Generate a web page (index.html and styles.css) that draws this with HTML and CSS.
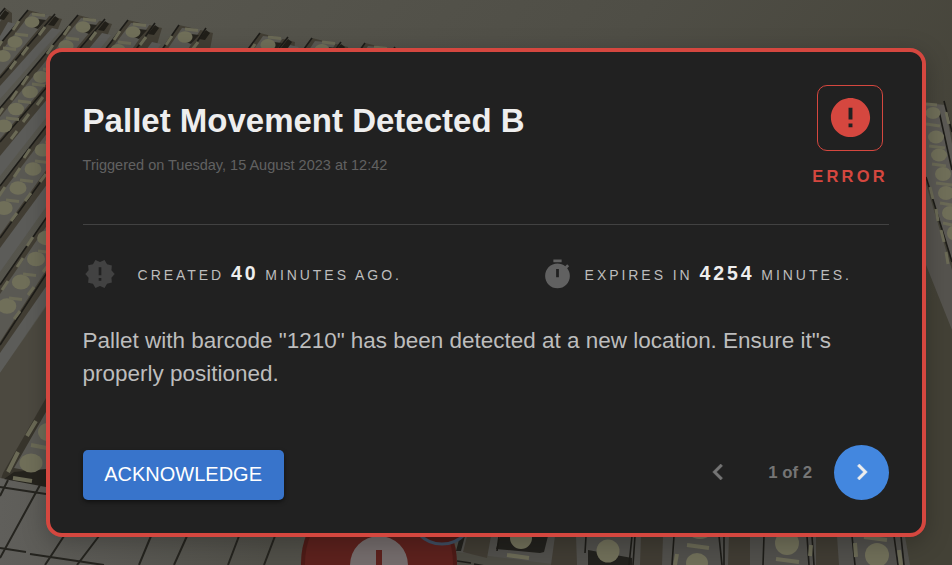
FILE: index.html
```
<!DOCTYPE html>
<html lang="en">
<head>
<meta charset="utf-8">
<title>Pallet Movement Detected</title>
<link rel="stylesheet" href="styles.css">
</head>
<body>
<svg class="scene" viewBox="0 0 952 565" aria-hidden="true">
  <defs>
    <linearGradient id="wall" x1="0" y1="0" x2="1" y2="0.5">
      <stop offset="0" stop-color="#595850"/><stop offset="0.55" stop-color="#4f4e46"/><stop offset="1" stop-color="#434136"/>
    </linearGradient>
    <linearGradient id="floor" x1="0" y1="0" x2="1" y2="0">
      <stop offset="0" stop-color="#605f5b"/><stop offset="0.3" stop-color="#504f48"/><stop offset="1" stop-color="#4e4d48"/>
    </linearGradient>
  </defs>
  <rect width="952" height="565" fill="url(#wall)"/>
  <g id="lanes"></g>
  <path d="M46 307L0 373V482L4 473L46 398Z" fill="#4c4940"/>
  <path d="M46 398L3 473L0 482L46 487Z" fill="#38352c"/>
  <path d="M46 412L14 468L46 474Z" fill="#5a5953"/>
  <path d="M0 478L46 485V520L120 536H905L900 565H0Z" fill="url(#floor)"/>
  <path d="M14 472L46 469V487L4 479Z" fill="#25231d"/>
  <g class="disc"><ellipse cx="31" cy="463" rx="11.500" ry="9.500"/><ellipse cx="47" cy="432" rx="9" ry="9"/></g>
  <path class="slat" d="M13 478L32 481M8 472L18 452M27 436L36 421M31 445L47 448"/>
  <path class="grid" d="M0 487L46 494M0 548L26 552M30 554L104 565M8 480L0 496M40 485L0 558M64 536L45 565M99 536L77 565M151 536L139 565M187 536L174 565M239 536L228 565M275 536L264 565"/>
  <path d="M457 536H905L910 565H457Z" fill="#504f4b"/>
  <path d="M457 552L560 565H457Z" fill="#4b4a42"/>
  <path d="M460 536H465L461 551H456ZM500 536H548L544 552L540 553L496 549ZM588 550L632 558V565H588Z" fill="#22211d"/>
  <path d="M467 536H491L487 558L463 552ZM555 536H576L577 565H551ZM641 536H663L662 565H640ZM729 536H750V565H728ZM816 536H837L839 565H816Z" fill="#403c33"/>
  <path class="rail" d="M499 536L497 551M457 561L471 563M474 564L490 567M586 536L585 553M632 536L629 565M635 536L633 565M674 536L672 565M719 536L722 565M724 536V565M764 536L763 565M807 536L809 565M812 536L814 565M852 536L855 565M894 536L898 565M901 536L904 565"/>
  <g class="disc"><circle cx="521" cy="538" r="11"/><circle cx="608" cy="551" r="11.500"/><ellipse cx="697" cy="563" rx="11" ry="10"/><circle cx="787" cy="543" r="12"/><circle cx="877" cy="555" r="12"/><ellipse cx="700" cy="536" rx="8" ry="3"/></g>
  <path class="slat" d="M507 555L529 558M687 545L709 548M776 559L799 562M864 537L887 540M899 550L901 565M677 554L675 565M855 543L856 557M811 545L810 556"/>
  <circle cx="379" cy="563" r="78" fill="#4d1b17"/><circle cx="379" cy="563" r="74" fill="#5c211d"/>
  <circle cx="379" cy="565" r="29" fill="#746c6c"/><rect x="376" y="550" width="6" height="15" fill="#5c211d"/>
  <circle cx="442" cy="512" r="32" fill="#4d1b17" stroke="#3f4d60" stroke-width="3"/>
  <g transform="translate(926 100)">
    <path d="M0 3L19 5L26 44V160L0 80Z" fill="#5b5954"/>
    <path d="M0 84L26 170V230L0 165Z" fill="#55534e"/>
    <path class="rail" d="M0 77L26 162M13 11L26 70M18 1L26 32"/>
    <g class="disc"><ellipse cx="7" cy="13" rx="7.500" ry="6"/><ellipse cx="10" cy="37" rx="8" ry="6.500"/><ellipse cx="13" cy="55" rx="8" ry="6.500"/><ellipse cx="17" cy="74" rx="8" ry="7"/><ellipse cx="20" cy="93" rx="8" ry="7"/><ellipse cx="24" cy="113" rx="8" ry="7"/><ellipse cx="27" cy="133" rx="6" ry="7"/></g>
    <path class="slat thin" d="M0 4L11 5M0 24L14 26M3 46L19 48M6 64L20 66M10 83L26 85M14 103L26 105M17 123L26 125M4 87L7 99M10 109L12 121M15 130L18 142M20 152L22 164M20 12L23 24"/>
  </g>
</svg>
<main class="card">
  <header class="head">
    <div>
      <h1 class="title">Pallet Movement Detected B</h1>
      <p class="when">Triggered on Tuesday, 15 August 2023 at 12:42</p>
    </div>
    <div class="level">
      <div class="level-box">
        <svg width="47" height="47" viewBox="0 0 24 24" fill="currentColor"><path d="M12 2C6.480 2 2 6.480 2 12s4.480 10 10 10 10-4.480 10-10S17.520 2 12 2zm1 15h-2v-2h2v2zm0-4h-2V7h2v6z"/></svg>
      </div>
      <span class="level-name">ERROR</span>
    </div>
  </header>
  <section class="facts">
    <div class="fact">
      <svg class="seal" width="32" height="32" viewBox="0 0 24 24" fill="currentColor"><path d="M23 12l-2.440-2.780.340-3.680-3.610-.820-1.890-3.180L12 3 8.600 1.540 6.710 4.720l-3.610.810.340 3.680L1 12l2.440 2.780-.340 3.690 3.610.820 1.890 3.180L12 21l3.400 1.460 1.890-3.180 3.610-.820-.340-3.680L23 12zm-10 5h-2v-2h2v2zm0-4h-2V7h2v6z"/></svg>
      <span class="fact-text">CREATED <b>40</b> MINUTES AGO.</span>
    </div>
    <div class="fact">
      <svg class="timer" width="33" height="33" viewBox="0 0 24 24" fill="currentColor" fill-rule="evenodd"><path d="M15 1H9v2h6V1zm-4 13h2V8h-2v6zm8.030-6.610l1.420-1.420c-.430-.510-.900-.990-1.410-1.410l-1.420 1.420C16.070 4.740 14.120 4 12 4c-4.970 0-9 4.030-9 9s4.020 9 9 9 9-4.030 9-9c0-2.120-.740-4.070-1.970-5.610z"/></svg>
      <span class="fact-text">EXPIRES IN <b>4254</b> MINUTES.</span>
    </div>
  </section>
  <p class="message">Pallet with barcode "1210" has been detected at a new location. Ensure it"s properly positioned.</p>
  <footer class="foot">
    <button class="ack">ACKNOWLEDGE</button>
    <nav class="pager">
      <svg class="prev arrow" width="32" height="32" viewBox="0 0 24 24" fill="currentColor"><path d="M15.410 7.410L14 6l-6 6 6 6 1.410-1.410L10.830 12z"/></svg>
      <span class="count">1 of 2</span>
      <button class="next" aria-label="Next"><svg class="arrow" width="32" height="32" viewBox="0 0 24 24" fill="currentColor"><path d="M10 6L8.590 7.410 13.170 12l-4.580 4.590L10 18l6-6z"/></svg></button>
    </nav>
  </footer>
</main>
<script src="scene.js"></script>
</body>
</html>
```
FILE: scene.js
```
// Each lane: left edge, right edge and beam as [x, y, x, y] segments, plus its rollers.
const lanes = [
  { left: [5, 8, -10, 26], right: [5, 8, -25, 44], beam: [8, 22, 0, 36, 9], rollers: [] },
  { left: [28, 10, 0, 44], right: [55, 14, 0, 78], beam: [52, 28, 0, 86, 13], rollers: [[32, 22], [15, 42], [3, 56]] },
  { left: [78, 15, 0, 108], right: [105, 19, 0, 142], beam: [102, 33, 0, 156, 20], rollers: [[83, 27], [66, 46], [41, 77], [30, 92], [16, 109], [4, 126]] },
  { left: [128, 20, 0, 186], right: [155, 23, 0, 238], beam: [152, 42, 0, 248, 24], rollers: [[133, 32], [118, 50], [43, 150], [33, 169], [18, 188], [4, 208]] },
  { left: [179, 25, 0, 285], right: [206, 28, 0, 345], beam: [203, 60, 0, 353, 20], rollers: [[185, 37], [46, 238], [36, 259], [21, 282], [7, 306]] },
  { left: [260, 33, 240, 60], right: [288, 37, 268, 62], beam: [290, 45, 280, 60, 5], rollers: [[268, 45]] },
  { left: [312, 38, 296, 60], right: [341, 42, 325, 64], beam: [345, 60, 340, 66, 3], rollers: [[322, 50]] },
  { left: [365, 43, 355, 57], right: [395, 47, 388, 57], beam: [398, 60, 390, 66, 3], rollers: [[374, 55]] }
];
let out = '';
for (const { left: l, right: r, beam: b, rollers } of lanes) {
  out += `<path fill="#423e34" d="M${l[0]} ${l[1]}L${r[0] + 7} ${r[1] + 5}L${b[0] + 4} ${b[1] + 6}L${b[2]} ${b[3] + 8}V${b[3]}L${l[2]} ${l[3]}Z"/>`;
  out += `<path fill="#5a5953" d="M${l[0] + 3} ${l[1] + 3}L${r[0] - 5} ${r[1] + 1}L${r[2]} ${r[3] - 3}L${l[2]} ${l[3] + 9}Z"/>`;
  out += `<path fill="#5c5c59" d="M${b[0]} ${b[1]}L${b[0] + 9} ${b[1] + 2}L${b[2]} ${b[3] + b[4]}V${b[3]}Z"/>`;
  out += `<path class="rail" d="M${l.slice(0, 2)}L${l.slice(2)}M${r.slice(0, 2)}L${r.slice(2)}"/>`;
  out += `<path fill="#211f19" d="M${r[0]} ${r[1] + 2}l4 3-5 7-6-1z"/>`;
  rollers.forEach(([x, y], i) => {
    const rx = 7.3 + y / 150;
    if (i === 0 && y < 60) out += `<path fill="#25231d" d="M${x + 6} ${y - 3}l8 1-8 9-5-2z"/>`;
    out += `<ellipse class="disc" cx="${x}" cy="${y}" rx="${rx}" ry="${rx - 1.7}"/>`;
    out += `<path class="slat thin" d="M${x + (y < 60 ? 0 : 2)} ${y - 8}l13 1.500M${x - 13} ${y - 1}l-6 9M${x + 13} ${y + 5}l-6 8"/>`;
  });
}
document.getElementById('lanes').innerHTML = out;
```
FILE: styles.css
```
* { box-sizing: border-box; }
body { margin: 0; width: 952px; height: 565px; overflow: hidden; background: #4d4b43; font-family: "Liberation Sans", Arial, sans-serif; }
.scene { position: absolute; top: 0; left: 0; width: 952px; height: 565px; }
.disc { fill: #706f59; }
.slat { fill: none; stroke: #6b6a56; stroke-width: 4; }
.thin { stroke-width: 3; }
.grid { fill: none; stroke: #25241f; stroke-width: 2; }
.rail { fill: none; stroke: #1d1c18; stroke-width: 1.6; }
.card { position: relative; display: flex; flex-direction: column; width: 880px; height: 489px; margin: 48px 0 0 46px; padding: 33px 33px 33px 32.600px; border: 4px solid #d5473f; border-radius: 16px; background: #212121; box-shadow: 0 6px 24px rgba(0, 0, 0, .25); }
h1, p { margin: 0; }
.head { display: flex; justify-content: space-between; height: 140px; border-bottom: 1px solid #424242; }
.title { margin-top: 16px; font-size: 33px; line-height: 40px; color: #eee; white-space: nowrap; }
.when { margin-top: 15px; font-size: 14.500px; line-height: 18px; color: #616161; }
.level { display: flex; flex-direction: column; align-items: center; width: 78px; color: #d5473f; }
.level-box { display: flex; align-items: center; justify-content: center; width: 66px; height: 66px; padding-bottom: 1px; border: 1px solid; border-radius: 10px; }
.level-name { margin: 15px 0 0; font-size: 16.500px; line-height: 20px; font-weight: 700; letter-spacing: 3.200px; }
.facts { display: flex; height: 99px; padding-top: 32px; }
.fact { display: flex; align-items: center; height: 34px; color: #bdbdbd; font-size: 14px; letter-spacing: 2.950px; white-space: nowrap; }
.fact:first-child { width: 458px; }
.fact b { font-size: 19.500px; letter-spacing: 2.900px; color: #eee; }
.fact-text { margin-bottom: 2px; }
.seal { margin: 0 22px 0 1px; color: #424242; }
.timer { margin-right: 11px; color: #616161; }
.message { font-size: 22.470px; line-height: 33px; color: #bdbdbd; }
.foot { display: flex; justify-content: space-between; align-items: flex-end; margin-top: auto; }
button { border: 0; padding: 0; font-family: inherit; }
.ack { width: 201px; height: 50px; padding-bottom: 1px; border-radius: 5px; background: #3874cb; color: #fff; font-size: 20px; box-shadow: 0 2px 4px rgba(0, 0, 0, .5); }
.pager { display: flex; align-items: center; }
.arrow { margin-bottom: 1px; stroke: currentColor; stroke-width: .4px; }
.prev { color: #757575; }
.count { margin: 0 22px 0 34px; font-size: 16.800px; font-weight: 700; color: #757575; }
.next { display: flex; align-items: center; justify-content: center; width: 55px; height: 55px; border-radius: 50%; background: #4387df; color: #eee; }
```
